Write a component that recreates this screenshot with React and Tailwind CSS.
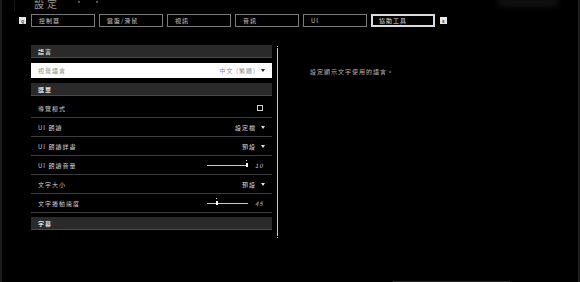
/* ====== settings / accessibility tab ====== */
var FONT = { fontFamily: '"Noto Sans CJK TC", "Noto Sans", sans-serif' };

var TABS = ["控制器", "鍵盤/滑鼠", "視訊", "音訊", "UI", "協助工具"];

export default function App() {
  return (
    <div
      className="relative flex h-[282px] w-[580px] flex-col overflow-hidden border-l-2 border-r-2 border-[#1c1c1c] bg-black"
      style={FONT}
    >
      {/* top title */}
      <div className="flex h-[12px] items-start border-l border-[#151515] pl-[19px]" style={{ marginLeft: "12px" }}>
        <div className="-mt-[4px] text-[10px] tracking-[3px] text-[#9a9a9a]">設定</div>
        <div className="ml-[18px] mt-[1px] h-[2px] w-[2px] bg-[#555]" />
        <div className="ml-[16px] mt-[1px] h-[2px] w-[2px] bg-[#555]" />
      </div>
      <div className="pointer-events-none absolute right-[20px] top-0 h-[5px] w-[60px] rounded-full bg-[#1c1c1c] blur-[3px]" />

      {/* tabs */}
      <div className="mt-[2px] flex items-center pl-[17px]">
        <KeyBox letter="Q" />
        <div className="ml-[5px] flex gap-[4px]">
          {TABS.map(function (t, i) {
            return <Tab key={"tab_" + i} label={t} active={i === TABS.length - 1} />;
          })}
        </div>
        <div className="ml-[5px]">
          <KeyBox letter="E" />
        </div>
      </div>

      {/* body */}
      <div className="mt-[18px] flex pl-[29px]">
        <div className="flex w-[241px] flex-col">
          <SectionHead label="語言" />
          <div className="mt-[5px] flex h-[15px] items-center justify-between bg-white px-[7px] text-[6px] tracking-[1px] text-[#8a8a8a]">
            <span>視覺語言</span>
            <span className="flex items-center gap-[5px]">
              中文 (繁體)
              <Arrow dark />
            </span>
          </div>
          <div className="mt-[5px]">
            <SectionHead label="選單" />
          </div>
          <div className="mt-[3px] flex flex-col">
            <Row label="導覽模式">
              <div className="mr-[2px] h-[6px] w-[6px] border border-[#cfcfcf]" />
            </Row>
            <Row label="UI 朗讀">
              <DropVal text="設定檔" />
            </Row>
            <Row label="UI 朗讀詳盡">
              <DropVal text="預設" />
            </Row>
            <Row label="UI 朗讀音量">
              <Slider pos={39} value="10" />
            </Row>
            <Row label="文字大小">
              <DropVal text="預設" />
            </Row>
            <Row label="文字捲動速度">
              <Slider pos={9} value="45" />
            </Row>
          </div>
          <div className="mt-[4px]">
            <SectionHead label="字幕" />
          </div>
        </div>

        {/* scrollbar */}
        <div className="ml-[5px] mt-[1px] flex h-[192px] w-[1px] flex-col items-center">
          <div className="h-[1px] w-[1px] bg-[#bbb]" />
          <div className="mt-[1px] w-[1px] flex-1 bg-[#c8c8c8]" />
          <div className="mt-[1px] h-[1px] w-[1px] bg-[#bbb]" />
        </div>

        {/* description */}
        <div className="ml-[32px] mt-[22px] text-[6px] tracking-[1px] text-[#b5b5b5]">
          設定顯示文字使用的語言。
        </div>
      </div>

      <div className="absolute bottom-0 left-[391px] h-[1px] w-[117px] bg-[#2a2a2a]" />
    </div>
  );
}

/* ---------- UI ---------- */

function KeyBox(props) {
  return (
    <div className="flex h-[7px] w-[7px] items-center justify-center bg-[#e8e8e8] text-[4px] font-bold leading-none text-[#333]">
      {props.letter}
    </div>
  );
}

function Tab(props) {
  var cls;
  cls = props.active
    ? "flex h-[13px] w-[64px] items-center border-2 border-[#dcdcdc] pl-[6px] text-[6px] tracking-[1px] text-[#e0e0e0]"
    : "flex h-[13px] w-[64px] items-center border border-[#7a7a7a] pl-[7px] text-[6px] tracking-[1px] text-[#c8c8c8]";
  return <div className={cls}>{props.label}</div>;
}

function SectionHead(props) {
  return (
    <div className="flex h-[13px] items-center border-b border-[#4a4a4a] bg-[#2a2a2a] px-[7px] text-[6px] font-bold tracking-[1px] text-[#dedede]">
      {props.label}
    </div>
  );
}

function Row(props) {
  return (
    <div className="flex h-[19px] items-center justify-between border-b border-[#3c3c3c] px-[7px] text-[6px] tracking-[1px] text-[#cfcfcf]">
      <span>{props.label}</span>
      {props.children}
    </div>
  );
}

function DropVal(props) {
  return (
    <span className="flex items-center gap-[5px] text-[#dcdcdc]">
      {props.text}
      <Arrow />
    </span>
  );
}

function Arrow(props) {
  return (
    <svg width="4" height="3" viewBox="0 0 4 3">
      <path d="M0 0h4L2 3z" fill={props.dark ? "#222" : "#e0e0e0"} />
    </svg>
  );
}

function Slider(props) {
  return (
    <div className="flex items-center">
      <div className="relative h-[1px] w-[41px] bg-[#c8c8c8]">
        <div
          className="absolute -top-[2px] h-[4px] w-[2px] bg-white"
          style={{ left: props.pos + "px" }}
        />
        <div
          className="absolute -top-[5px] h-[1px] w-[1px] bg-[#ddd]"
          style={{ left: props.pos + "px" }}
        />
      </div>
      <span className="ml-[7px] w-[10px] text-[6px] italic text-[#cfcfcf]">{props.value}</span>
    </div>
  );
}
